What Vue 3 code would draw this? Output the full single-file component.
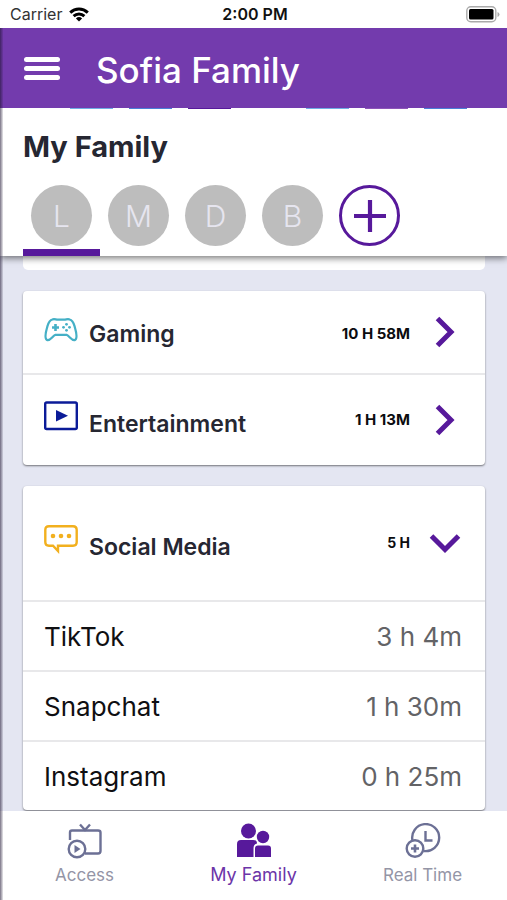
<script setup>
import { ref } from 'vue'

const members = ['L', 'M', 'D', 'B']
const active = ref(0)
const socialOpen = ref(true)
const apps = [
  { name: 'TikTok', time: '3 h 4m' },
  { name: 'Snapchat', time: '1 h 30m' },
  { name: 'Instagram', time: '0 h 25m' },
]
const stripes = ['light', 'blue', 'violet', 'none', 'light', 'purple', 'blue']
</script>

<template>
  <div class="page">
    <div class="status">
      <div class="carrier">
        <span>Carrier</span>
        <svg width="20" height="15" viewBox="0 0 20 15" fill="none" stroke="#000" stroke-width="3">
          <path d="M1.2 5.6C6.3.8 13.7.8 18.8 5.6" />
          <path d="M4.6 9.1C7.7 6.2 12.3 6.2 15.4 9.1" />
          <path d="M10 14.5 6.9 11.4Q10 8.8 13.1 11.4Z" fill="#000" stroke="none" />
        </svg>
      </div>
      <span class="clock">2:00 PM</span>
      <svg class="battery" width="34" height="17" viewBox="0 0 34 17">
        <rect x=".8" y=".8" width="29" height="15" rx="4" fill="#fff" stroke="#aaa" stroke-width="1.4" />
        <rect x="3" y="3" width="24.500" height="10.500" rx="1.500" fill="#000" />
        <path d="M31.500 6v5q2-.8 2-2.500t-2-2.500Z" fill="#aaa" />
      </svg>
    </div>

    <div class="screen">
      <header class="bar">
        <button class="menu" aria-label="Menu"><i></i><i></i><i></i></button>
        <h1>Sofia Family</h1>
      </header>

      <section class="family">
        <div class="stripes"><i v-for="(s, n) in stripes" :key="n" :class="s"></i></div>
        <h2>My Family</h2>
        <div class="members">
          <button
            v-for="(m, n) in members"
            :key="m"
            class="member"
            :class="{ active: n === active }"
            @click="active = n"
          >
            <span class="avatar">{{ m }}</span>
          </button>
          <button class="member" aria-label="Add family member">
            <span class="avatar add">
              <svg width="32" height="32" viewBox="0 0 32 32" stroke="#57199b" stroke-width="4.200">
                <path d="M16 0v32M0 16h32" />
              </svg>
            </span>
          </button>
        </div>
      </section>

      <main class="content">
        <div class="card tail"></div>

        <div class="card">
          <button class="row basic">
            <svg class="icon" width="34" height="30" viewBox="0 0 34 30" fill="none" stroke="#45b0c6" stroke-width="2.300" stroke-linejoin="round">
              <path d="M8.500 4.500C10 3.500 12 4.700 13.500 4.700H20.500C22 4.700 24 3.500 25.500 4.500 28.500 5.200 29.500 7.500 30.500 11 32 16 34 23.500 31 25 28 26.300 25.500 21 22.500 19.800H11.500C8.500 21 6 26.300 3 25 0 23.500 2 16 3.500 11 4.500 7.500 5.500 5.200 8.500 4.500Z" />
              <path d="M11.500 9v7M8 12.500h7" stroke-width="2.600" />
              <g fill="#45b0c6" stroke="none">
                <circle cx="22.500" cy="9.300" r="1.400" /><circle cx="22.500" cy="15.300" r="1.400" />
                <circle cx="19.500" cy="12.300" r="1.400" /><circle cx="25.500" cy="12.300" r="1.400" />
              </g>
            </svg>
            <span class="label">Gaming</span>
            <span class="time">10 H 58M</span>
            <svg class="chevron" width="32" height="32" viewBox="0 0 32 32"><path d="M8.500 2.500 22 16 8.500 29.500" /></svg>
          </button>
          <button class="row medium">
            <svg class="icon" width="34" height="30" viewBox="0 0 34 30">
              <rect x="1.200" y="1.500" width="31.600" height="26.500" rx="1.500" fill="none" stroke="#0b1b98" stroke-width="2.400" />
              <path d="M12 9v11.500l12-5.750Z" fill="#0b1b98" />
            </svg>
            <span class="label">Entertainment</span>
            <span class="time">1 H 13M</span>
            <svg class="chevron" width="32" height="32" viewBox="0 0 32 32"><path d="M8.500 2.500 22 16 8.500 29.500" /></svg>
          </button>
        </div>

        <div class="card">
          <button class="row large" :aria-expanded="socialOpen" @click="socialOpen = !socialOpen">
            <svg class="icon" width="34" height="30" viewBox="0 0 34 30">
              <path d="M5 2.200H29Q32.700 2.200 32.700 6V18Q32.700 21.700 29 21.700H14V27L9 21.700H5Q1.300 21.700 1.300 18V6Q1.300 2.200 5 2.200Z" fill="none" stroke="#f2b01e" stroke-width="2.400" />
              <g fill="#f2b01e">
                <circle cx="9" cy="12" r="2.300" /><circle cx="17" cy="12" r="2.300" /><circle cx="25" cy="12" r="2.300" />
              </g>
            </svg>
            <span class="label">Social Media</span>
            <span class="time small">5 H</span>
            <svg class="chevron" width="32" height="32" viewBox="0 0 32 32"><path d="M2.500 9 16 22.500 29.500 9" /></svg>
          </button>
          <ul v-if="socialOpen" class="apps">
            <li v-for="app in apps" :key="app.name">
              <span>{{ app.name }}</span><span class="used">{{ app.time }}</span>
            </li>
          </ul>
        </div>
      </main>

      <nav class="tabs">
        <a href="#access">
          <svg width="36" height="36" viewBox="0 0 36 36" fill="none" stroke="#6c7095" stroke-width="2.400">
            <path d="M3 17V9.500Q3 7.500 5 7.500H31Q33.500 7.500 33.500 9.500V28Q33.500 30.500 31 30.500H18" />
            <path d="M13 1.500 18 7 23 1.500" />
            <circle cx="10" cy="26" r="8.300" />
            <path d="M7.500 22v8l6-4Z" fill="#6c7095" stroke="none" />
          </svg>
          <span>Access</span>
        </a>
        <a href="#family" class="current" aria-current="page">
          <svg width="36" height="36" viewBox="0 0 36 36" fill="#57199b">
            <circle cx="12.500" cy="8" r="7.500" />
            <path d="M1 21Q1 17 5 17H17Q21 17 21 20.500 17.500 21 17.500 25.500V34H1Z" />
            <circle cx="27" cy="14" r="6.200" />
            <path d="M19 25.500Q19 22.500 22 22.500H32Q35 22.500 35 25.500V34H19Z" />
          </svg>
          <span>My Family</span>
        </a>
        <a href="#realtime">
          <svg width="36" height="36" viewBox="0 0 36 36" fill="none" stroke="#6c7095" stroke-width="2.400">
            <path d="M7.500 17.500A13.500 13.500 0 1 1 19 28" />
            <path d="M20.500 8v9.500h7" />
            <circle cx="10" cy="25.500" r="8.300" />
            <path d="M10 21.500v8M6 25.500h8" stroke-width="2.600" />
          </svg>
          <span>Real Time</span>
        </a>
      </nav>
    </div>
  </div>
</template>

<style>
body {
  margin: 0;
}
</style>

<style scoped>
.page {
  display: flex;
  flex-direction: column;
  min-height: 100vh;
  background: #fff;
  color: #262732;
  font-family: Inter, "Open Sans", sans-serif;
}
button {
  margin: 0;
  padding: 0;
  border: 0;
  background: none;
  color: inherit;
  font: inherit;
  text-align: left;
  cursor: pointer;
}
svg {
  display: block;
  flex: none;
}
.status {
  display: grid;
  grid-template-columns: 1fr auto 1fr;
  align-items: center;
  height: 28px;
  padding: 0 7px 0 10px;
  box-sizing: border-box;
  font-size: 16px;
  color: #333;
}
.carrier {
  display: flex;
  align-items: center;
  gap: 7px;
}
.clock {
  font-weight: 600;
  color: #111;
}
.battery {
  justify-self: end;
}
.screen {
  position: relative;
  display: flex;
  flex: 1;
  flex-direction: column;
}
.screen::after {
  content: "";
  position: absolute;
  inset: 0 auto 0 0;
  z-index: 3;
  width: 3px;
  background: linear-gradient(90deg, rgba(30, 20, 50, 0.6), rgba(30, 20, 50, 0.1));
  pointer-events: none;
}
.bar {
  position: relative;
  z-index: 3;
  display: flex;
  align-items: center;
  gap: 36px;
  height: 80px;
  padding: 0 24px;
  background: #733bad;
  color: #fff;
}
.bar h1 {
  margin: 0;
  padding-top: 4px;
  font-size: 35px;
  font-weight: 500;
  line-height: 40px;
}
.menu {
  display: grid;
  gap: 4px;
  width: 36px;
}
.menu i {
  height: 5px;
  border-radius: 3px;
  background: #fff;
}
.family {
  position: relative;
  z-index: 2;
  padding: 0 23px;
  background: #fff;
  box-shadow: 0 2px 7px rgba(0, 0, 0, 0.55);
}
.stripes {
  display: flex;
  gap: 16px;
  height: 1px;
  padding-left: 47px;
}
.stripes i {
  width: 43px;
}
.stripes .light {
  background: #6faee6;
}
.stripes .blue {
  background: #4a7fd8;
}
.stripes .violet {
  background: #57199b;
}
.stripes .purple {
  background: #8d55b8;
}
.family h2 {
  margin: 0;
  padding: 20px 0 20px;
  font-size: 29px;
  font-weight: 700;
  line-height: 36px;
}
.members {
  display: flex;
}
.member {
  display: flex;
  justify-content: center;
  width: 77px;
  padding-bottom: 3px;
  border-bottom: 7px solid transparent;
}
.member.active {
  border-color: #57199b;
}
.avatar {
  display: grid;
  place-items: center;
  width: 61px;
  height: 61px;
  box-sizing: border-box;
  border-radius: 50%;
  background: #bdbdbd;
  color: #e6e5ef;
  font-size: 30px;
  font-weight: 300;
}
.avatar.add {
  border: 3px solid #57199b;
  background: #fff;
}
.content {
  display: flex;
  flex: 1;
  flex-direction: column;
  gap: 21px;
  padding: 0 22px 1px 23px;
  background: #e4e6f2;
}
.card {
  border-radius: 4px;
  background: #fff;
  box-shadow: 0 1px 2px rgba(0, 0, 0, 0.5);
}
.tail {
  height: 14px;
  border-radius: 0 0 5px 5px;
  box-shadow: none;
}
.row {
  display: grid;
  grid-template-columns: 34px 1fr auto 32px;
  align-items: center;
  width: 100%;
  height: 82px;
  padding: 0 24px 0 21px;
  column-gap: 11px;
}
.row + .row {
  border-top: 2px solid #e8e8ea;
}
.medium {
  height: 92px;
}
.large {
  height: 114px;
}
.icon {
  margin-bottom: 8px;
}
.basic .icon {
  margin-bottom: 4px;
}
.label {
  padding-top: 4px;
  font-size: 23px;
  font-weight: 600;
  line-height: 28px;
}
.medium .label,
.large .label {
  padding-top: 8px;
}
.time {
  padding-right: 8px;
  color: #0c0c0f;
  font-size: 15px;
  font-weight: 700;
  line-height: 20px;
}
.basic .time {
  padding-top: 4px;
}
.time.small {
  font-size: 14px;
}
.chevron {
  fill: none;
  stroke: #57199b;
  stroke-width: 5;
}
.apps {
  margin: 0;
  padding: 0;
  list-style: none;
}
.apps li {
  display: flex;
  align-items: center;
  justify-content: space-between;
  height: 70px;
  padding: 0 23px 0 21px;
  border-top: 2px solid #e8e8ea;
  box-sizing: border-box;
  color: #0f0f12;
  font-size: 26px;
}
.apps .used {
  color: #636366;
}
.tabs {
  display: grid;
  grid-template-columns: repeat(3, 1fr);
  height: 89px;
  background: #fff;
}
.tabs a {
  display: flex;
  flex-direction: column;
  align-items: center;
  gap: 4px;
  padding-top: 12px;
  color: #9495a6;
  font-size: 17px;
  line-height: 24px;
  text-decoration: none;
}
.tabs .current {
  color: #6c35a8;
  font-size: 18px;
}
</style>
